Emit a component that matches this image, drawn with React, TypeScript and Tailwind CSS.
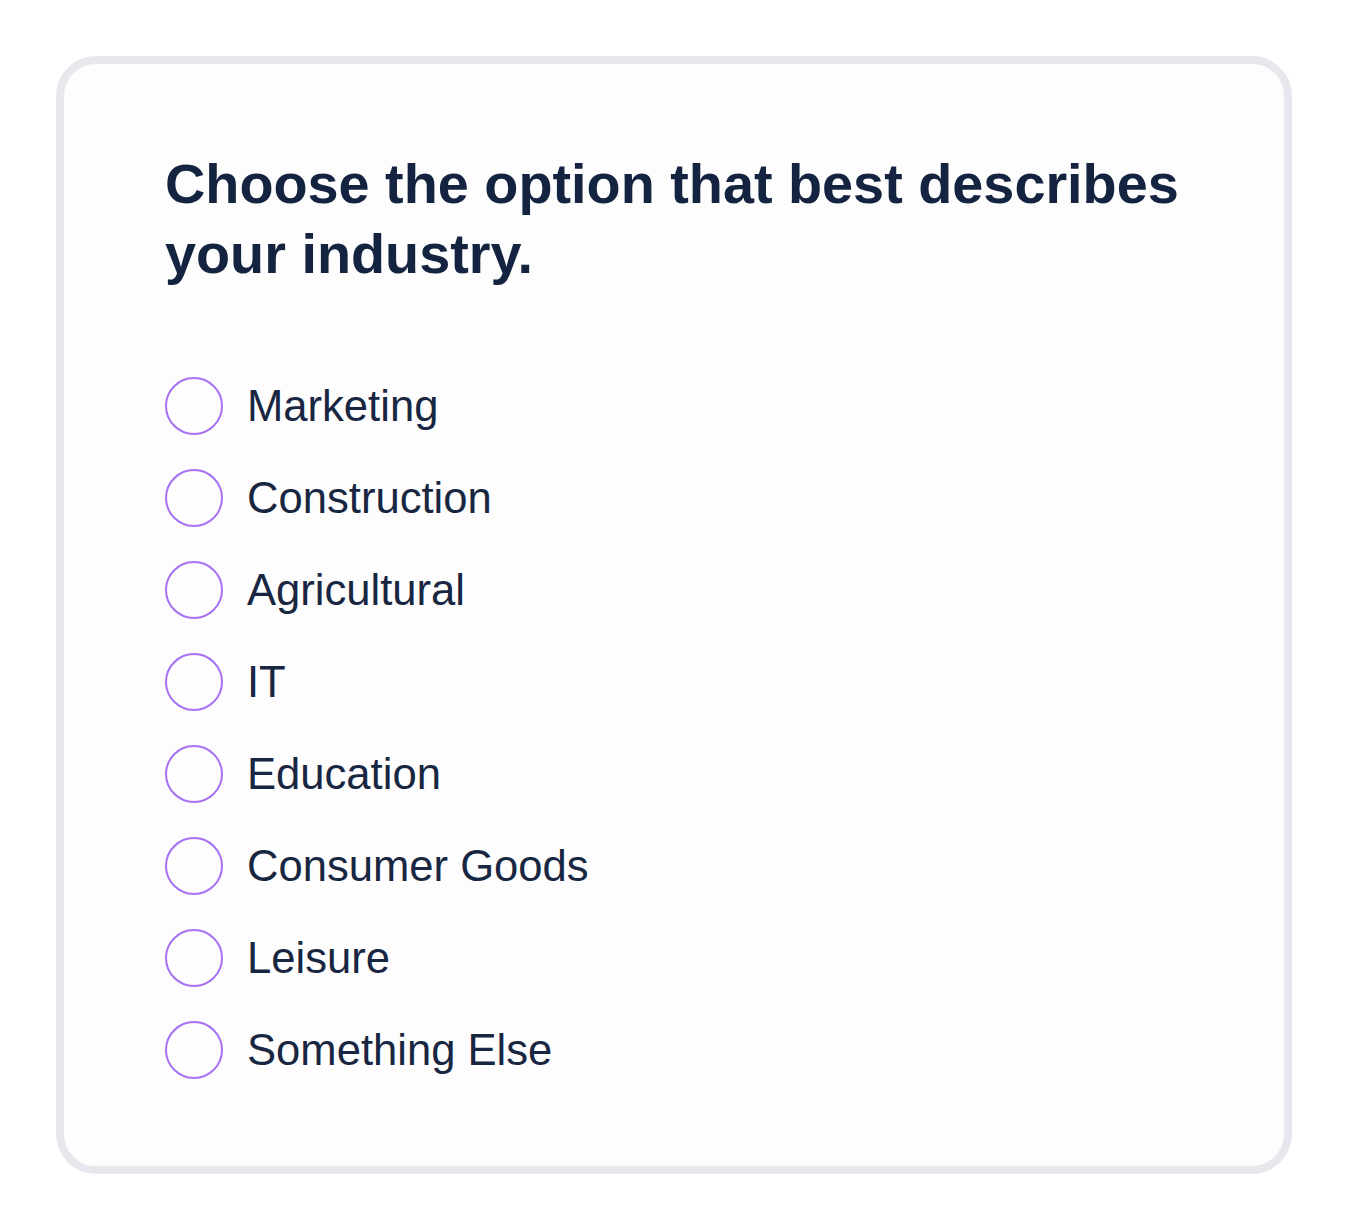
import React from 'react';

const options = [
  'Marketing',
  'Construction',
  'Agricultural',
  'IT',
  'Education',
  'Consumer Goods',
  'Leisure',
  'Something Else',
];

const App: React.FC = () => {
  return (
    <div className="min-h-screen bg-white p-[56px] font-['Liberation_Sans',Arial,sans-serif]">
      <div className="rounded-[40px] border-[8px] border-[#e7e7ed] bg-[#fdfdfd] pl-[101px] pr-[50px] pt-[85px] pb-[87px]">
        <h2 className="text-[55.8px] font-bold leading-[70px] text-[#14233f]">
          Choose the option that best describes your industry.
        </h2>
        <div className="mt-[88px] flex flex-col gap-[34px]">
          {options.map((opt) => (
            <label key={opt} className="flex items-center gap-[24px]">
              <span className="h-[58px] w-[58px] shrink-0 rounded-full border-[2px] border-[#a672f5]" />
              <span className="text-[43.6px] leading-[58px] text-[#182642]">{opt}</span>
            </label>
          ))}
        </div>
      </div>
    </div>
  );
};

export default App;
